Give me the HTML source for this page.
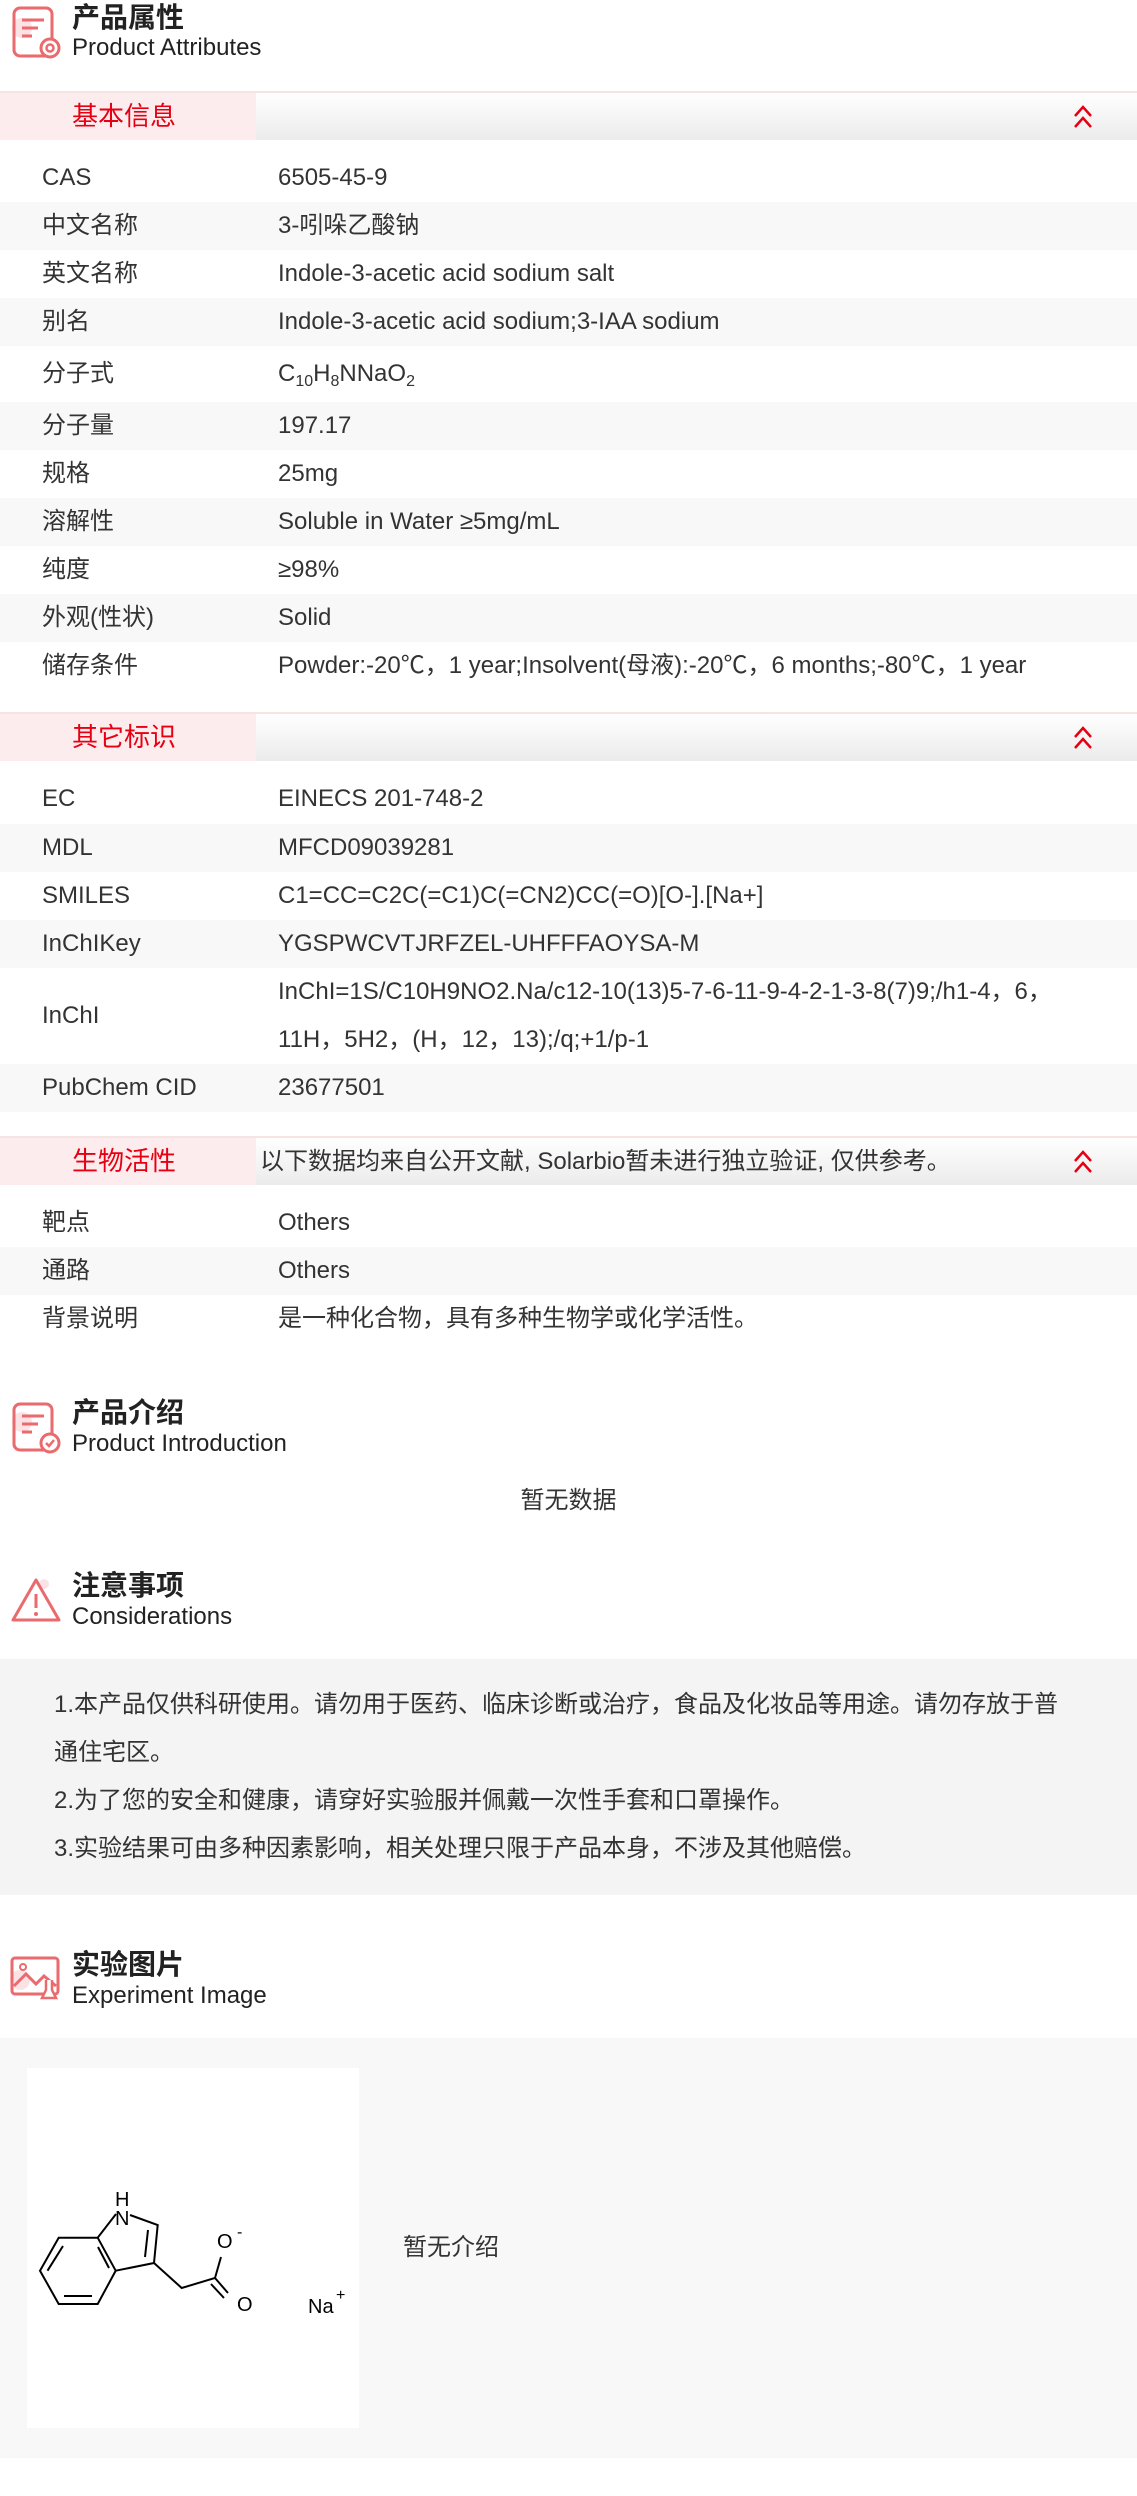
<!DOCTYPE html>
<html><head><meta charset="utf-8"><style>
*{margin:0;padding:0;box-sizing:border-box}
body{width:1137px;height:2496px;position:relative;background:#fff;font-family:"Liberation Sans","Noto Sans CJK SC",sans-serif;color:#333;overflow:hidden}
.a{position:absolute}
.t{position:absolute;left:72px;font-size:28px;font-weight:bold;color:#222;line-height:32px}
.s{position:absolute;left:72px;font-size:24px;color:#222;line-height:28px}
.bar{position:absolute;left:0;width:1137px;height:49px;border-top:2px solid #f6e4e4;background:linear-gradient(#fff,#ebebeb)}
.tab{position:absolute;left:0;top:0;width:256px;height:47px;background:#fdecee;color:#e60012;font-size:26px;line-height:47px;padding-left:72px}
.chev{position:absolute;left:1072px;top:12px}
.row{position:absolute;left:0;width:1137px;height:48px;font-size:24px;line-height:48px}
.row.g{background:#f8f8f8}
.row .l{position:absolute;left:42px}
.row .v{position:absolute;left:278px;white-space:nowrap}
sub{font-size:16px;vertical-align:-5px;line-height:0}
</style></head><body>

<svg class="a" style="left:8px;top:4px" width="56" height="56" viewBox="0 0 56 56">
<circle cx="14" cy="24" r="10" fill="#fbe3e5"/>
<rect x="6" y="4" width="38" height="48" rx="6" fill="none" stroke="#ea6a6e" stroke-width="3"/>
<path d="M14 16h22M14 24h16M14 32h10" stroke="#ea6a6e" stroke-width="3"/>
<circle cx="42" cy="44" r="9" fill="#fff" stroke="#ea6a6e" stroke-width="3"/><circle cx="42" cy="44" r="3.5" fill="none" stroke="#ea6a6e" stroke-width="2.5"/>
</svg>
<div class="t" style="top:2px">产品属性</div>
<div class="s" style="top:34px">Product Attributes</div>

<div class="bar" style="top:91px"><div class="tab">基本信息</div>
<svg class="chev" width="22" height="24" viewBox="0 0 22 24"><path d="M3 11L11 2L19 11M3 22L11 13L19 22" fill="none" stroke="#e60012" stroke-width="2.5"/></svg></div>

<div class="row" style="top:154px"><span class="l">CAS</span><span class="v">6505-45-9</span></div>
<div class="row g" style="top:202px"><span class="l">中文名称</span><span class="v">3-吲哚乙酸钠</span></div>
<div class="row" style="top:250px"><span class="l">英文名称</span><span class="v">Indole-3-acetic acid sodium salt</span></div>
<div class="row g" style="top:298px"><span class="l">别名</span><span class="v">Indole-3-acetic acid sodium;3-IAA sodium</span></div>
<div class="row" style="top:346px;height:56px;line-height:56px"><span class="l">分子式</span><span class="v">C<sub>10</sub>H<sub>8</sub>NNaO<sub>2</sub></span></div>
<div class="row g" style="top:402px"><span class="l">分子量</span><span class="v">197.17</span></div>
<div class="row" style="top:450px"><span class="l">规格</span><span class="v">25mg</span></div>
<div class="row g" style="top:498px"><span class="l">溶解性</span><span class="v">Soluble in Water ≥5mg/mL</span></div>
<div class="row" style="top:546px"><span class="l">纯度</span><span class="v">≥98%</span></div>
<div class="row g" style="top:594px"><span class="l">外观(性状)</span><span class="v">Solid</span></div>
<div class="row" style="top:642px"><span class="l">储存条件</span><span class="v">Powder:-20℃，1 year;Insolvent(母液):-20℃，6 months;-80℃，1 year</span></div>

<div class="bar" style="top:712px"><div class="tab">其它标识</div>
<svg class="chev" width="22" height="24" viewBox="0 0 22 24"><path d="M3 11L11 2L19 11M3 22L11 13L19 22" fill="none" stroke="#e60012" stroke-width="2.5"/></svg></div>

<div class="row" style="top:775px"><span class="l">EC</span><span class="v">EINECS 201-748-2</span></div>
<div class="row g" style="top:824px"><span class="l">MDL</span><span class="v">MFCD09039281</span></div>
<div class="row" style="top:872px"><span class="l">SMILES</span><span class="v">C1=CC=C2C(=C1)C(=CN2)CC(=O)[O-].[Na+]</span></div>
<div class="row g" style="top:920px"><span class="l">InChIKey</span><span class="v">YGSPWCVTJRFZEL-UHFFFAOYSA-M</span></div>
<div class="row" style="top:968px;height:96px;line-height:96px"><span class="l">InChI</span><span class="v" style="line-height:48px;top:0">InChI=1S/C10H9NO2.Na/c12-10(13)5-7-6-11-9-4-2-1-3-8(7)9;/h1-4，6，<br>11H，5H2，(H，12，13);/q;+1/p-1</span></div>
<div class="row g" style="top:1064px"><span class="l">PubChem CID</span><span class="v">23677501</span></div>

<div class="bar" style="top:1136px"><div class="tab">生物活性</div>
<div class="a" style="left:260px;top:0;line-height:47px;font-size:24px;color:#333;white-space:nowrap">以下数据均来自公开文献, Solarbio暂未进行独立验证, 仅供参考。</div>
<svg class="chev" width="22" height="24" viewBox="0 0 22 24"><path d="M3 11L11 2L19 11M3 22L11 13L19 22" fill="none" stroke="#e60012" stroke-width="2.5"/></svg></div>

<div class="row" style="top:1199px"><span class="l">靶点</span><span class="v">Others</span></div>
<div class="row g" style="top:1247px"><span class="l">通路</span><span class="v">Others</span></div>
<div class="row" style="top:1295px"><span class="l">背景说明</span><span class="v">是一种化合物，具有多种生物学或化学活性。</span></div>

<svg class="a" style="left:8px;top:1400px" width="56" height="56" viewBox="0 0 56 56">
<circle cx="14" cy="22" r="10" fill="#fbe3e5"/>
<rect x="6" y="4" width="38" height="46" rx="6" fill="none" stroke="#ea6a6e" stroke-width="3"/>
<path d="M14 16h22M14 24h16M14 32h10" stroke="#ea6a6e" stroke-width="3"/>
<circle cx="42" cy="43" r="9" fill="#fff" stroke="#ea6a6e" stroke-width="3"/><path d="M38 43l3 3l5-6" fill="none" stroke="#ea6a6e" stroke-width="2.5"/>
</svg>
<div class="t" style="top:1397px">产品介绍</div>
<div class="s" style="top:1430px">Product Introduction</div>
<div class="a" style="left:0;width:1137px;text-align:center;top:1485px;font-size:24px;line-height:32px">暂无数据</div>

<svg class="a" style="left:8px;top:1572px" width="56" height="56" viewBox="0 0 56 56">
<circle cx="36" cy="12" r="5" fill="#fbe3e5"/>
<path d="M28 8L5 48h46Z" fill="none" stroke="#ea6a6e" stroke-width="3" stroke-linejoin="round"/>
<path d="M28 22v14" stroke="#ea6a6e" stroke-width="3"/><circle cx="28" cy="42" r="2" fill="#ea6a6e"/>
</svg>
<div class="t" style="top:1570px">注意事项</div>
<div class="s" style="top:1603px">Considerations</div>

<div class="a" style="left:0;top:1659px;width:1137px;height:236px;background:#f4f4f4;padding:22px 0 0 54px;font-size:24px;line-height:48px;color:#333;white-space:nowrap">
1.本产品仅供科研使用。请勿用于医药、临床诊断或治疗，食品及化妆品等用途。请勿存放于普<br>通住宅区。<br>
2.为了您的安全和健康，请穿好实验服并佩戴一次性手套和口罩操作。<br>
3.实验结果可由多种因素影响，相关处理只限于产品本身，不涉及其他赔偿。
</div>

<svg class="a" style="left:6px;top:1950px" width="58" height="56" viewBox="0 0 58 56">
<circle cx="14" cy="30" r="10" fill="#fbe3e5"/>
<rect x="6" y="8" width="46" height="36" rx="3" fill="none" stroke="#ea6a6e" stroke-width="3"/>
<path d="M8 36l12-12l10 10l8-8l12 10" fill="none" stroke="#ea6a6e" stroke-width="3"/>
<circle cx="17" cy="17" r="3" fill="none" stroke="#ea6a6e" stroke-width="2"/>
<path d="M40 30v10l-4 8h14l-4-8v-10" fill="#fff" stroke="#ea6a6e" stroke-width="2.5"/>
</svg>
<div class="t" style="top:1949px">实验图片</div>
<div class="s" style="top:1982px">Experiment Image</div>

<div class="a" style="left:0;top:2038px;width:1137px;height:420px;background:#f8f8f8"></div>
<div class="a" style="left:27px;top:2068px;width:332px;height:360px;background:#fff"></div>
<svg class="a" style="left:0;top:0" width="1137" height="2496" viewBox="0 0 1137 2496">
<g fill="none" stroke="#000" stroke-width="2">
<path d="M58.7 2237.7L97.7 2237.7L115.7 2270.7L97.7 2304L58.7 2304L40 2270.7Z"/>
<path d="M63 2246L47.5 2270.7M64 2296L92 2296M98 2247L109 2268"/>
<path d="M97.7 2237.7L116 2214M130 2215L157.7 2225L154 2263L115.7 2270.7"/>
<path d="M148 2230L145 2257"/>
<path d="M154 2263L181.7 2288L215 2278L221 2257"/>
<path d="M215 2278L228 2293M211 2284L224 2298"/>
</g>
<g font-family="Liberation Sans,sans-serif" font-size="20" fill="#000">
<text x="115" y="2206">H</text><text x="115" y="2225">N</text>
<text x="217" y="2248">O</text><text x="237" y="2237" font-size="16">-</text>
<text x="237" y="2311">O</text>
<text x="308" y="2313">Na</text><text x="336" y="2300" font-size="16">+</text>
</g>
</svg>
<div class="a" style="left:403px;top:2232px;font-size:24px;line-height:32px">暂无介绍</div>

</body></html>
